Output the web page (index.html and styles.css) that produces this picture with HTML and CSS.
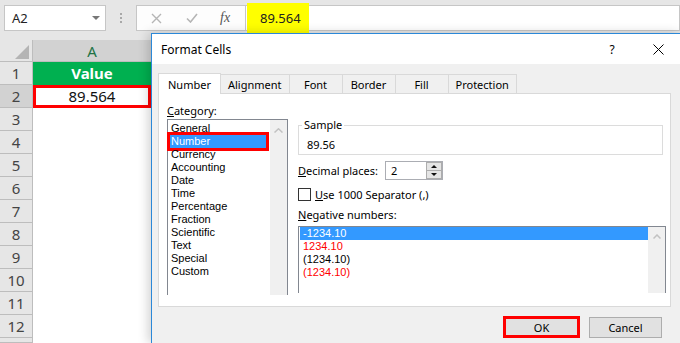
FILE: index.html
```html
<!DOCTYPE html>
<html lang="en">
<head>
    <meta charset="UTF-8">
    <meta name="viewport" content="width=device-width, initial-scale=1.0">
    <title>Format Cells</title>
    <link rel="stylesheet" href="styles.css">
</head>
<body>
    <!-- Name box and formula bar -->
    <div class="topbar">
        <div class="namebox">
            <span>A2</span>
            <span class="drop"></span>
        </div>
        <div class="dots"><i></i><i></i><i></i></div>
        <div class="fbuttons">
            <svg width="11" height="11" viewBox="0 0 11 11"><path d="M1 1L10 10M10 1L1 10" stroke="#b5b5b5" stroke-width="1.4" fill="none"/></svg>
            <svg width="12" height="10" viewBox="0 0 12 10"><path d="M1 5.5L4.5 9L11 1" stroke="#b5b5b5" stroke-width="1.6" fill="none"/></svg>
            <span class="fx">fx</span>
        </div>
        <div class="formula"><span class="hl">89.564</span></div>
    </div>

    <!-- Sheet -->
    <div class="sheet">
        <div class="row head">
            <div class="rh corner"><span class="tri"></span></div>
            <div class="cell colA">A</div>
        </div>
        <div class="row"><div class="rh">1</div><div class="cell green">Value</div></div>
        <div class="row"><div class="rh sel">2</div><div class="cell picked">89.564</div></div>
        <div class="row"><div class="rh">3</div><div class="cell"></div></div>
        <div class="row"><div class="rh">4</div><div class="cell"></div></div>
        <div class="row"><div class="rh">5</div><div class="cell"></div></div>
        <div class="row"><div class="rh">6</div><div class="cell"></div></div>
        <div class="row"><div class="rh">7</div><div class="cell"></div></div>
        <div class="row"><div class="rh">8</div><div class="cell"></div></div>
        <div class="row"><div class="rh">9</div><div class="cell"></div></div>
        <div class="row"><div class="rh">10</div><div class="cell"></div></div>
        <div class="row"><div class="rh">11</div><div class="cell"></div></div>
        <div class="row"><div class="rh">12</div><div class="cell"></div></div>
        <div class="row last"><div class="rh"></div><div class="cell"></div></div>
    </div>

    <!-- Format Cells dialog -->
    <div class="dialog">
        <div class="titlebar">
            <span class="title">Format Cells</span>
            <span class="tbtn">?</span>
            <span class="tbtn">
                <svg width="11" height="11" viewBox="0 0 11 11"><path d="M0.5 0.5L10.5 10.5M10.5 0.5L0.5 10.5" stroke="#000" stroke-width="1" fill="none"/></svg>
            </span>
        </div>

        <div class="dbody">
            <div class="tabs">
                <div class="tab active">Number</div>
                <div class="tab">Alignment</div>
                <div class="tab">Font</div>
                <div class="tab">Border</div>
                <div class="tab">Fill</div>
                <div class="tab">Protection</div>
            </div>

            <div class="panel">
                <div class="leftcol">
                    <div class="label"><u>C</u>ategory:</div>
                    <div class="listbox cat">
                        <ul class="items">
                            <li>General</li>
                            <li class="selected">Number</li>
                            <li>Currency</li>
                            <li>Accounting</li>
                            <li>Date</li>
                            <li>Time</li>
                            <li>Percentage</li>
                            <li>Fraction</li>
                            <li>Scientific</li>
                            <li>Text</li>
                            <li>Special</li>
                            <li>Custom</li>
                        </ul>
                        <div class="scroll">
                            <svg width="9" height="5" viewBox="0 0 9 5"><path d="M0.5 4.5L4.5 0.8L8.5 4.5" stroke="#c2c2c2" stroke-width="1.5" fill="none"/></svg>
                        </div>
                    </div>
                </div>

                <div class="rightcol">
                    <fieldset class="sample">
                        <legend>Sample</legend>
                        <div class="sample-val">89.56</div>
                    </fieldset>

                    <div class="decimal">
                        <span class="dlabel"><u>D</u>ecimal places:</span>
                        <div class="spin">
                            <span class="val">2</span>
                            <span class="arrows">
                                <span><i class="up"></i></span>
                                <span><i class="down"></i></span>
                            </span>
                        </div>
                    </div>

                    <div class="check">
                        <span class="box"></span>
                        <span><u>U</u>se 1000 Separator (,)</span>
                    </div>

                    <div class="label neg-label"><u>N</u>egative numbers:</div>
                    <div class="listbox neg">
                        <ul class="items">
                            <li class="selected">-1234.10</li>
                            <li class="red">1234.10</li>
                            <li>(1234.10)</li>
                            <li class="red">(1234.10)</li>
                        </ul>
                        <div class="scroll">
                            <svg width="8" height="5" viewBox="0 0 8 5"><path d="M0.5 4.5L4 1L7.5 4.5" stroke="#c2c2c2" stroke-width="1.5" fill="none"/></svg>
                        </div>
                    </div>
                </div>
            </div>

            <div class="footer">
                <button class="btn ok">OK</button>
                <button class="btn">Cancel</button>
            </div>
        </div>
    </div>
</body>
</html>
```

FILE: styles.css
```css
* {
    margin: 0;
    padding: 0;
    box-sizing: border-box;
}

body {
    width: 680px;
    height: 343px;
    overflow: hidden;
    position: relative;
    background-color: #e6e6e6;
    font-family: "Noto Sans", "Liberation Sans", Arial, sans-serif;
}

/* Formula bar */
.topbar {
    height: 40px;
    display: flex;
    align-items: flex-start;
    padding: 5px 0 0 4px;
}

.namebox {
    width: 102px;
    height: 26px;
    background-color: #fff;
    border: 1px solid #c6c6c6;
    display: flex;
    align-items: center;
    justify-content: space-between;
    padding: 0 5px 0 7px;
    font-size: 13px;
    color: #222;
}

.namebox .drop {
    width: 0;
    height: 0;
    border-left: 4px solid transparent;
    border-right: 4px solid transparent;
    border-top: 4px solid #777;
}

.dots {
    width: 30px;
    height: 26px;
    display: flex;
    flex-direction: column;
    align-items: center;
    justify-content: center;
    gap: 2px;
}

.dots i {
    width: 2px;
    height: 2px;
    background-color: #a8a8a8;
}

.fbuttons {
    width: 110px;
    height: 26px;
    background-color: #fdfdfd;
    border: 1px solid #c6c6c6;
    display: flex;
    align-items: center;
    padding-left: 14px;
    gap: 24px;
}

.fbuttons .fx {
    font-family: "Liberation Serif", serif;
    font-style: italic;
    font-size: 14px;
    color: #555;
    margin-left: -2px;
}

.formula {
    flex: 1;
    height: 26px;
    background-color: #fff;
    border: 1px solid #c6c6c6;
    border-left: none;
    display: flex;
    align-items: center;
}

.formula .hl {
    height: 30px;
    margin-left: 1px;
    padding: 0 8px 0 13px;
    background-color: #ffff00;
    font-size: 13px;
    line-height: 30px;
    color: #222;
}

/* Sheet */
.row {
    display: flex;
    height: 23px;
}

.row.head {
    height: 22px;
}

.row.last {
    height: 5px;
}

.rh {
    width: 33px;
    background-color: #e6e6e6;
    border-right: 1px solid #bdbdbd;
    border-bottom: 1px solid #bdbdbd;
    color: #444;
    font-size: 15px;
    line-height: 22px;
    text-align: center;
}

.rh.sel {
    background-color: #d2d2d2;
}

.rh.corner {
    display: flex;
    align-items: flex-end;
    justify-content: flex-end;
    padding: 0 3px 2px 0;
}

.rh.corner .tri {
    width: 0;
    height: 0;
    border-left: 14px solid transparent;
    border-bottom: 14px solid #b4b4b4;
}

.cell {
    width: 118px;
    background-color: #fff;
    font-size: 15px;
    line-height: 23px;
    text-align: center;
    color: #111;
}

.cell.colA {
    background-color: #d2d2d2;
    color: #217346;
    line-height: 22px;
    border-bottom: 1px solid #bdbdbd;
}

.cell.green {
    background-color: #00b050;
    color: #fff;
    font-weight: bold;
}

.cell.picked {
    box-shadow: inset 0 0 0 3px #ff0000;
}

/* Dialog */
.dialog {
    position: absolute;
    left: 151px;
    top: 33px;
    width: 530px;
    height: 310px;
    background-color: #f0f0f0;
    border-top: 1px solid #2b88d8;
    border-left: 1px solid #2b88d8;
    box-shadow: -3px 0 10px rgba(0, 0, 0, 0.18);
    font-size: 11px;
    color: #000;
}

.titlebar {
    height: 30px;
    background-color: #fff;
    display: flex;
    align-items: center;
    padding-left: 9px;
    font-size: 12px;
}

.titlebar .title {
    flex: 1;
}

.tbtn {
    width: 46px;
    height: 30px;
    display: flex;
    align-items: center;
    justify-content: center;
    font-size: 12px;
}

.dbody {
    padding: 9px 10px 0 6px;
}

.tabs {
    display: flex;
    align-items: flex-end;
    height: 20px;
}

.tab {
    height: 19px;
    padding: 0 7px;
    min-width: 54px;
    border: 1px solid #d9d9d9;
    border-bottom: none;
    margin-left: -1px;
    text-align: center;
    line-height: 19px;
}

.tab.active {
    height: 21px;
    margin-left: 0;
    margin-bottom: -1px;
    padding: 0 9px;
    background-color: #fff;
    position: relative;
    z-index: 1;
    line-height: 21px;
}

.panel {
    height: 214px;
    background-color: #fff;
    border: 1px solid #d9d9d9;
    display: flex;
    gap: 10px;
    padding: 9px 0 0 8px;
}

.label {
    line-height: 16px;
}

.leftcol {
    width: 121px;
}

.listbox {
    display: flex;
    border: 1px solid #828790;
    border-bottom: none;
    background-color: #fff;
}

.listbox.cat {
    height: 176px;
}

.listbox .items {
    flex: 1;
    list-style: none;
    font-family: "Liberation Sans", Arial, sans-serif;
    font-size: 11px;
    line-height: 13px;
}

.listbox.cat .items {
    padding-top: 2px;
}

.listbox.cat li {
    padding-left: 3px;
}

.listbox.cat li.selected {
    margin: 0 4px 0 2px;
    padding-left: 1px;
    background-color: #3399ff;
    color: #fff;
    box-shadow: 0 0 0 3px #ff0000;
}

.listbox .scroll {
    width: 17px;
    background-color: #f0f0f0;
    display: flex;
    justify-content: center;
    padding-top: 8px;
}

.rightcol {
    width: 368px;
}

.sample {
    width: 365px;
    margin-top: 15px;
    border: 1px solid #dcdcdc;
    padding: 6px 3px 2px;
}

.sample legend {
    padding: 0 2px;
    line-height: 14px;
}

.sample-val {
    padding-left: 5px;
    line-height: 14px;
}

.decimal {
    display: flex;
    align-items: center;
    margin-top: 6px;
}

.dlabel {
    width: 87px;
}

.spin {
    width: 58px;
    height: 19px;
    display: flex;
    border: 1px solid #abadb3;
    background-color: #fff;
}

.spin .val {
    flex: 1;
    padding-left: 5px;
    line-height: 17px;
}

.spin .arrows {
    width: 16px;
    display: flex;
    flex-direction: column;
}

.spin .arrows span {
    flex: 1;
    background-color: #e5e5e5;
    border: 1px solid #adadad;
    display: flex;
    align-items: center;
    justify-content: center;
}

.spin .arrows span + span {
    border-top: none;
}

.spin .up {
    border-left: 3px solid transparent;
    border-right: 3px solid transparent;
    border-bottom: 3px solid #111;
}

.spin .down {
    border-left: 3px solid transparent;
    border-right: 3px solid transparent;
    border-top: 3px solid #111;
}

.check {
    display: flex;
    align-items: center;
    gap: 4px;
    margin-top: 8px;
    height: 13px;
}

.check .box {
    width: 13px;
    height: 13px;
    border: 1px solid #333;
    background-color: #fff;
}

.neg-label {
    margin-top: 6px;
}

.listbox.neg {
    height: 67px;
    margin-top: 3px;
}

.listbox.neg li {
    padding-left: 4px;
}

.listbox.neg li.selected {
    margin-left: 1px;
    padding-left: 3px;
    background-color: #3399ff;
    color: #fff;
}

.listbox.neg li.red {
    color: #ff0000;
}

.listbox.neg .scroll {
    padding-top: 7px;
}

.footer {
    display: flex;
    justify-content: flex-end;
    align-items: flex-start;
    gap: 9px;
    padding: 9px 9px 0 0;
}

.btn {
    width: 73px;
    height: 21px;
    margin-top: 1px;
    background-color: #e1e1e1;
    border: 1px solid #adadad;
    font-family: inherit;
    font-size: 11px;
    color: #000;
}

.btn.ok {
    width: 77px;
    height: 22px;
    margin-top: 0;
    border: 3px solid #ff0000;
}
```
